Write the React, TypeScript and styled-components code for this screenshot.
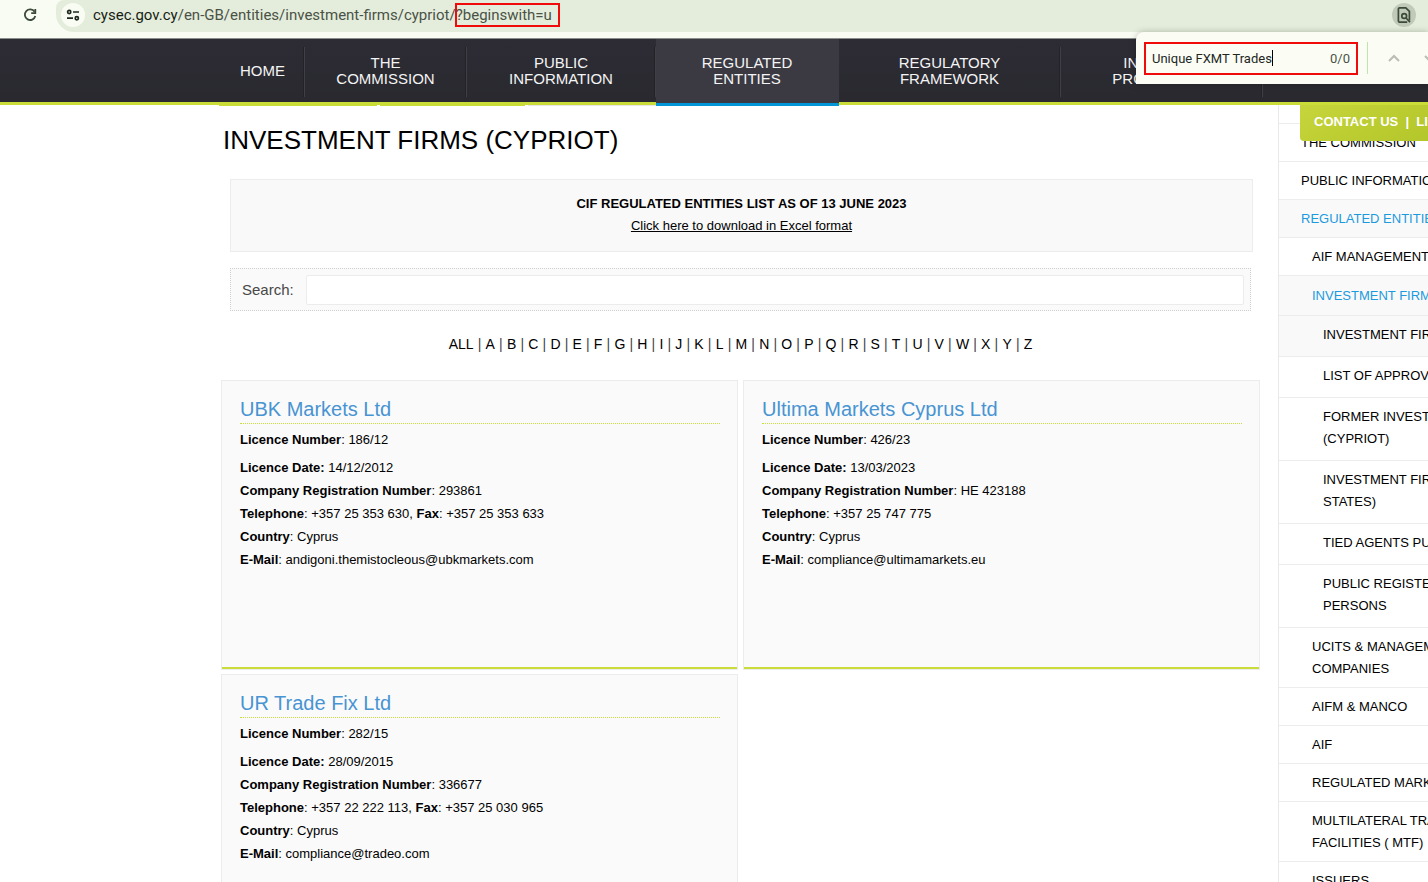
import React from "react";
import styled, { createGlobalStyle } from "styled-components";

const GlobalStyle = createGlobalStyle`
  *, *::before, *::after { box-sizing: border-box; }
  body {
    margin: 0;
    background: #fff;
    color: #000;
    font-family: "Liberation Sans", Arial, sans-serif;
    font-size: 13px;
  }
  a { color: inherit; text-decoration: none; }
  ul, p, h1, h2 { margin: 0; padding: 0; }
  ul { list-style: none; }
`;

const Shell = styled.div`
  position: relative;
  display: flex;
  flex-direction: column;
  height: 100vh;
  overflow: hidden;
`;

/* ---------- Browser chrome ---------- */

const BrowserBar = styled.header`
  display: flex;
  flex: none;
  height: 39px;
  padding: 0 0 6px 18px;
  background: #f9fcf3;
  border-bottom: 1px solid #8b8f8a;
`;

const IconButton = styled.button`
  display: flex;
  align-items: center;
  justify-content: center;
  width: 24px;
  height: 24px;
  margin-top: 3px;
  padding: 0;
  border: 0;
  border-radius: 50%;
  background: transparent;
  color: #3c4a3a;
`;

const SiteButton = styled(IconButton)`
  background: #f9fcf3;
  color: #1f2a1e;
`;

const PageSearchButton = styled(IconButton)`
  margin-left: auto;
  background: #c1cab8;
`;

const AddressBar = styled.div`
  display: flex;
  flex: 1;
  min-width: 0;
  margin-left: 14px;
  padding: 0 12px 0 5px;
  background: #e4eddb;
  border-radius: 8px 0 0 18px;
`;

const Address = styled.div`
  margin-left: 8px;
  font-family: Roboto, "Noto Sans", sans-serif;
  font-size: 15px;
  line-height: 30px;
  color: #4a5247;
  white-space: nowrap;
`;

const Host = styled.span`
  color: #171d15;
`;

const Query = styled.span`
  position: relative;
  display: inline-block;
`;

const Marker = styled.span<{ $inset: string }>`
  position: absolute;
  inset: ${(p) => p.$inset};
  border: 2px solid #f00a0a;
  pointer-events: none;
`;

const FindBar = styled.form`
  position: absolute;
  z-index: 3;
  top: 32px;
  right: 0;
  display: flex;
  align-items: center;
  width: 292px;
  height: 52px;
  overflow: hidden;
  background: #fbfdf4;
  border-radius: 8px 0 0 0;
  box-shadow: 0 0 6px rgba(0, 0, 0, 0.25);
  font-family: Roboto, "Noto Sans", sans-serif;
  font-size: 13px;
`;

const FindField = styled.label`
  position: relative;
  display: flex;
  flex: none;
  align-items: center;
  width: 214px;
  height: 33px;
  margin-left: 8px;
  padding: 0 8px;
`;

const FindInput = styled.input`
  field-sizing: content;
  padding: 0;
  border: 0;
  outline: 0;
  background: transparent;
  color: #22271f;
  font: inherit;
`;

const Caret = styled.span`
  width: 1px;
  height: 16px;
  background: #000;
`;

const FindCount = styled.span`
  margin-left: auto;
  color: #4a5247;
`;

const FindDivider = styled.span`
  flex: none;
  width: 1px;
  height: 32px;
  margin: 0 14px 0 9px;
  background: #bfe6a6;
`;

const FindStep = styled.button`
  flex: none;
  width: 24px;
  height: 24px;
  margin-right: 12px;
  padding: 0;
  border: 0;
  background: transparent;
  color: #b9bdb3;
`;

/* ---------- Site navigation ---------- */

const Nav = styled.nav`
  display: flex;
  flex: none;
  height: 66px;
  padding-left: 221px;
  background: linear-gradient(#2d2c35, #29292f);
  border-bottom: 3px solid #c9dc38;
`;

const NavItem = styled.a<{ $width: number; $active?: boolean }>`
  position: relative;
  display: flex;
  flex: none;
  align-items: center;
  justify-content: center;
  width: ${(p) => p.$width}px;
  height: ${(p) => (p.$active ? 67 : 63)}px;
  padding: 0 1px ${(p) => (p.$active ? 1 : 0)}px 0;
  border-bottom: ${(p) => (p.$active ? "3px solid #0396d6" : "0")};
  background: ${(p) => (p.$active ? "#3b3a43" : "transparent")};
  color: #f4f4f4;
  font-size: 15px;
  line-height: 16px;
  text-align: center;
  white-space: pre-line;

  &::after {
    content: "";
    display: ${(p) => (p.$active ? "none" : "block")};
    position: absolute;
    top: 8px;
    right: 0;
    width: 2px;
    height: 50px;
    background: #222227;
    border-right: 1px solid #3f3f48;
  }
`;

const ContactTab = styled.div`
  position: absolute;
  z-index: 2;
  top: 105px;
  right: 0;
  width: 128px;
  height: 36px;
  padding-left: 14px;
  overflow: hidden;
  background: linear-gradient(150deg, #c6d53b, #b3c62a);
  border-radius: 0 0 0 4px;
  color: #fff;
  font-weight: 700;
  line-height: 34px;
  white-space: pre;
`;

/* ---------- Page body ---------- */

const Page = styled.div`
  display: flex;
  flex: 1;
  min-height: 0;
`;

const Main = styled.main`
  flex: 1;
  min-width: 0;
  padding: 0 18px 0 221px;
`;

const Tabs = styled.div`
  display: flex;
  gap: 3px;
  height: 1px;
  margin-left: -2px;
`;

const Tab = styled.span<{ $width: number; $plain?: boolean }>`
  width: ${(p) => p.$width}px;
  background: ${(p) => (p.$plain ? "#e6e6e6" : "#c9dc38")};
`;

const Title = styled.h1`
  padding: 18px 0 0 2px;
  font-size: 26px;
  font-weight: 400;
  line-height: 32px;
`;

const Notice = styled.section`
  height: 73px;
  margin: 23px 7px 0 9px;
  padding-top: 13px;
  background: #f9f9f9;
  border: 1px solid #ececec;
  line-height: 22px;
  text-align: center;

  a { text-decoration: underline; }
`;

const Search = styled.form`
  display: flex;
  align-items: center;
  gap: 12px;
  height: 43px;
  margin: 16px 9px 0;
  padding: 0 6px 0 11px;
  background: #fafafa;
  border: 1px dotted #cfcfcf;
`;

const SearchLabel = styled.label`
  color: #484848;
  font-size: 15px;
`;

const SearchInput = styled.input`
  flex: 1;
  height: 30px;
  border: 1px solid #ececec;
  border-radius: 2px;
  background: #fff;
`;

const Letters = styled.nav`
  margin-top: 22px;
  font-size: 14px;
  line-height: 22px;
  text-align: center;
`;

const Bar = styled.span`
  display: inline-block;
  width: 12px;
  color: #444;
`;

const Cards = styled.div`
  display: grid;
  grid-template-columns: 1fr 1fr;
  gap: 4px 5px;
  margin-top: 25px;
`;

const Card = styled.article`
  height: 290px;
  padding: 16px 18px 0;
  background: #fafafa;
  border: 1px solid #ececec;
  box-shadow: inset 0 -2px 0 #c9dc38;
`;

const CardTitle = styled.h2`
  height: 27px;
  margin-right: -1px;
  border-bottom: 1px dotted #c9dc38;
  color: #4894d2;
  font-size: 20px;
  font-weight: 400;
  line-height: 24px;
`;

const Line = styled.p<{ $first?: boolean }>`
  margin: ${(p) => (p.$first ? "4px 0 5px" : "0")};
  line-height: 23px;
`;

/* ---------- Side menu ---------- */

const Side = styled.aside`
  flex: none;
  width: 150px;
  padding-top: 18px;
  overflow: hidden;
  border-left: 1px solid #e9e9e9;
`;

const SideList = styled.ul`
  border-top: 1px solid #ececec;
`;

const padFor = { 1: 22, 2: 33, 3: 44 };

const SideItem = styled.li<{ $level: 1 | 2 | 3; $roomy?: boolean; $tint?: boolean; $current?: boolean }>`
  padding: ${(p) => (p.$level === 3 ? "8px 0 10px" : p.$roomy ? "9px 0 8px" : "8px 0 7px")};
  padding-left: ${(p) => padFor[p.$level]}px;
  border-bottom: 1px solid #ececec;
  background: ${(p) => (p.$tint ? "#f9f9f9" : "transparent")};
  color: ${(p) => (p.$current ? "#1c9ade" : "#000")};
  line-height: 22px;
  white-space: pre;
`;

const ReloadIcon = () => (
  <svg width="16" height="16" viewBox="0 0 16 16" fill="none" stroke="currentColor" strokeWidth="1.8" aria-hidden="true">
    <path d="M12.6 4.8A5.3 5.3 0 1 0 13.3 9" />
    <path d="M13.3 2v4.2H9.2" />
  </svg>
);

const TuneIcon = () => (
  <svg width="14" height="14" viewBox="0 0 14 14" fill="none" stroke="currentColor" strokeWidth="1.7" aria-hidden="true">
    <circle cx="3.2" cy="4" r="1.6" />
    <path d="M7 4h6M1 10.2h6" />
    <circle cx="10.8" cy="10.2" r="1.6" />
  </svg>
);

const PageSearchIcon = () => (
  <svg width="16" height="18" viewBox="0 0 16 18" fill="none" stroke="currentColor" strokeWidth="1.7" aria-hidden="true">
    <path d="M13.4 14.5V5.4L9.8 1.8H3.6a1.2 1.2 0 0 0-1.2 1.2v12a1.2 1.2 0 0 0 1.2 1.2h7.6" />
    <circle cx="8.2" cy="10" r="2.4" />
    <path d="M10 12l4 4.2" />
  </svg>
);

const Chevron = ({ down = false }: { down?: boolean }) => (
  <svg width="24" height="24" viewBox="0 0 24 24" fill="none" stroke="currentColor" strokeWidth="2" aria-hidden="true">
    <path d={down ? "M7 10l5 5 5-5" : "M7 15l5-5 5 5"} />
  </svg>
);

const navItems = [
  { label: "HOME", width: 84 },
  { label: "THE\nCOMMISSION", width: 162 },
  { label: "PUBLIC\nINFORMATION", width: 189 },
  { label: "REGULATED\nENTITIES", width: 183, active: true },
  { label: "REGULATORY\nFRAMEWORK", width: 222 },
  { label: "INVESTOR\nPROTECTION", width: 202 },
];

const letters = ["ALL", ..."ABCDEFGHIJKLMNOPQRSTUVWXYZ".split("")];

interface Firm {
  name: string;
  licence: string;
  date: string;
  registration: string;
  telephone: string;
  fax?: string;
  email: string;
}

const firms: Firm[] = [
  {
    name: "UBK Markets Ltd",
    licence: "186/12",
    date: "14/12/2012",
    registration: "293861",
    telephone: "+357 25 353 630",
    fax: "+357 25 353 633",
    email: "andigoni.themistocleous@ubkmarkets.com",
  },
  {
    name: "Ultima Markets Cyprus Ltd",
    licence: "426/23",
    date: "13/03/2023",
    registration: "HE 423188",
    telephone: "+357 25 747 775",
    email: "compliance@ultimamarkets.eu",
  },
  {
    name: "UR Trade Fix Ltd",
    licence: "282/15",
    date: "28/09/2015",
    registration: "336677",
    telephone: "+357 22 222 113",
    fax: "+357 25 030 965",
    email: "compliance@tradeo.com",
  },
];

interface MenuEntry {
  label: string;
  level: 1 | 2 | 3;
  roomy?: boolean;
  tint?: boolean;
  current?: boolean;
}

const menu: MenuEntry[] = [
  { label: "THE COMMISSION", level: 1 },
  { label: "PUBLIC INFORMATION", level: 1 },
  { label: "REGULATED ENTITIES", level: 1, tint: true, current: true },
  { label: "AIF MANAGEMENT", level: 2 },
  { label: "INVESTMENT FIRMS", level: 2, roomy: true, tint: true, current: true },
  { label: "INVESTMENT FIRMS", level: 3, tint: true },
  { label: "LIST OF APPROVED", level: 3 },
  { label: "FORMER INVESTMENT\n(CYPRIOT)", level: 3 },
  { label: "INVESTMENT FIRMS\nSTATES)", level: 3 },
  { label: "TIED AGENTS PUBLIC", level: 3 },
  { label: "PUBLIC REGISTER\nPERSONS", level: 3 },
  { label: "UCITS & MANAGEMENT\nCOMPANIES", level: 2 },
  { label: "AIFM & MANCO", level: 2 },
  { label: "AIF", level: 2 },
  { label: "REGULATED MARKETS", level: 2 },
  { label: "MULTILATERAL TRADING\nFACILITIES ( MTF)", level: 2 },
  { label: "ISSUERS", level: 2 },
];

const FirmCard = ({ firm }: { firm: Firm }) => (
  <Card>
    <CardTitle><a href="#firm">{firm.name}</a></CardTitle>
    <Line $first><b>Licence Number</b>: {firm.licence}</Line>
    <Line><b>Licence Date:</b> {firm.date}</Line>
    <Line><b>Company Registration Number</b>: {firm.registration}</Line>
    <Line>
      <b>Telephone</b>: {firm.telephone}
      {firm.fax && <>, <b>Fax</b>: {firm.fax}</>}
    </Line>
    <Line><b>Country</b>: Cyprus</Line>
    <Line><b>E-Mail</b>: {firm.email}</Line>
  </Card>
);

export default function App() {
  return (
    <Shell>
      <GlobalStyle />
      <BrowserBar>
        <IconButton type="button" aria-label="Reload"><ReloadIcon /></IconButton>
        <AddressBar>
          <SiteButton type="button" aria-label="Site information"><TuneIcon /></SiteButton>
          <Address>
            <Host>cysec.gov.cy</Host>/en-GB/entities/investment-firms/cypriot/
            <Query>?beginswith=u<Marker $inset="3px -8px 3px -1px" /></Query>
          </Address>
          <PageSearchButton type="button" aria-label="Find in page"><PageSearchIcon /></PageSearchButton>
        </AddressBar>
      </BrowserBar>

      <FindBar>
        <FindField>
          <FindInput aria-label="Find" defaultValue="Unique FXMT Trades" />
          <Caret />
          <FindCount>0/0</FindCount>
          <Marker $inset="0" />
        </FindField>
        <FindDivider />
        <FindStep type="button" aria-label="Previous"><Chevron /></FindStep>
        <FindStep type="button" aria-label="Next"><Chevron down /></FindStep>
      </FindBar>

      <Nav>
        {navItems.map((item) => (
          <NavItem key={item.label} href="#nav" $width={item.width} $active={item.active}>
            {item.label}
          </NavItem>
        ))}
      </Nav>
      <ContactTab><a href="#contact">CONTACT US</a>  |  <a href="#links">LINKS</a></ContactTab>

      <Page>
        <Main>
          <Tabs>
            <Tab $width={158} />
            <Tab $width={145} />
            <Tab $width={128} $plain />
          </Tabs>
          <Title>INVESTMENT FIRMS (CYPRIOT)</Title>
          <Notice>
            <p><b>CIF REGULATED ENTITIES LIST AS OF 13 JUNE 2023</b></p>
            <p><a href="#download">Click here to download in Excel format</a></p>
          </Notice>
          <Search>
            <SearchLabel htmlFor="firm-search">Search:</SearchLabel>
            <SearchInput id="firm-search" type="text" />
          </Search>
          <Letters>
            {letters.map((letter, i) => (
              <React.Fragment key={letter}>
                {i > 0 && <Bar>|</Bar>}
                <a href={`#${letter}`}>{letter}</a>
              </React.Fragment>
            ))}
          </Letters>
          <Cards>
            {firms.map((firm) => <FirmCard key={firm.name} firm={firm} />)}
          </Cards>
        </Main>
        <Side>
          <SideList>
            {menu.map((entry, i) => (
              <SideItem
                key={i}
                $level={entry.level}
                $roomy={entry.roomy}
                $tint={entry.tint}
                $current={entry.current}
              >
                <a href="#menu">{entry.label}</a>
              </SideItem>
            ))}
          </SideList>
        </Side>
      </Page>
    </Shell>
  );
}
